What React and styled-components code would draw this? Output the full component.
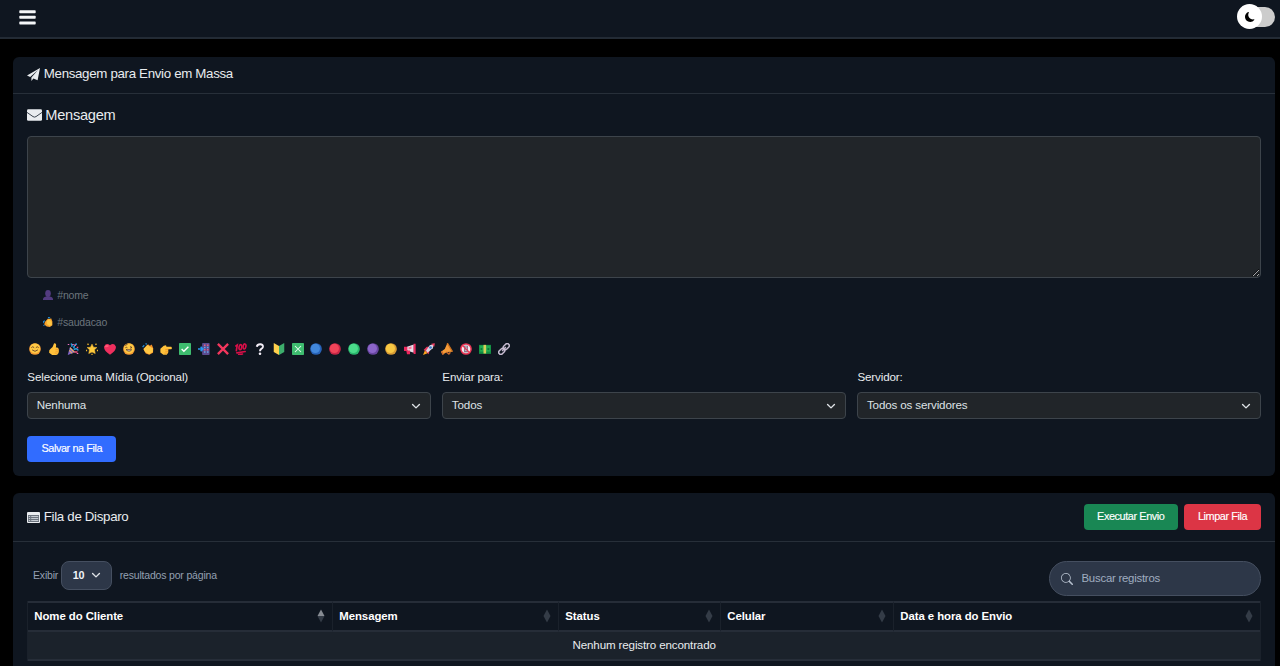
import React, { useState } from 'react';
import styled, { createGlobalStyle } from 'styled-components';
import { BsMoonFill, BsSearch } from 'react-icons/bs';

const GlobalStyle = createGlobalStyle`
  * {
    box-sizing: border-box;
  }
  body {
    margin: 0;
    background: #000;
    color: #e9ecef;
    font-family: "Liberation Sans", Arial, sans-serif;
    font-size: 11.6px;
    letter-spacing: -0.14px;
    overflow: hidden;
  }
`;

const TopBar = styled.header`
  height: 39px;
  padding: 0 5px 4px 19px;
  display: flex;
  align-items: center;
  justify-content: space-between;
  background: #0f1620;
  border-bottom: 2px solid #232b35;
`;

const MenuButton = styled.button`
  display: flex;
  padding: 1px 0 0;
  border: none;
  background: none;
`;

const Track = styled.div`
  width: 35px;
  height: 20px;
  border-radius: 10px;
  background: #ccc;
  display: flex;
  align-items: center;
`;

const Thumb = styled.div`
  flex: none;
  width: 25px;
  height: 25px;
  margin-left: -3px;
  border-radius: 50%;
  background: #fff;
  color: #000;
  display: flex;
  align-items: center;
  justify-content: center;
`;

const Page = styled.main`
  padding: 18px 4.7px 0 13.3px;
  display: flex;
  flex-direction: column;
  gap: 17px;
`;

const Card = styled.section`
  height: ${props => props.$height}px;
  background: #0f1620;
  border-radius: 6px;
`;

const CardHeader = styled.div`
  height: ${props => props.$height}px;
  padding: 0 14.3px 0 14px;
  display: flex;
  align-items: center;
  justify-content: space-between;
  border-bottom: 1px solid #272f39;
`;

const Title = styled.h5`
  margin: 0;
  padding-bottom: ${props => props.$lift || 0}px;
  display: flex;
  align-items: center;
  gap: 3.5px;
  font-size: 13.3px;
  font-weight: 400;
  line-height: 16px;
  letter-spacing: -0.32px;
`;

const CardBody = styled.div`
  padding: 0 14.3px 0 14px;
`;

const MessageTitle = styled.h4`
  margin: 0;
  height: 42px;
  display: flex;
  align-items: center;
  gap: 3px;
  font-size: 14.6px;
  font-weight: 400;
  letter-spacing: -0.25px;
`;

const Message = styled.textarea`
  display: block;
  width: 100%;
  height: 142px;
  border: 1px solid #3d444b;
  border-radius: 4px;
  background: #212529;
  color: #e9ecef;
  outline: none;
`;

const Tags = styled.div`
  padding: 4px 0 0 16px;
`;

const Tag = styled.div`
  height: 27px;
  padding-bottom: 2px;
  display: flex;
  align-items: center;
  gap: 4px;
  font-size: 10.5px;
  letter-spacing: -0.18px;
  color: #6c757d;
`;

const EmojiRow = styled.div`
  height: 28px;
  padding: 0 0 2px 2px;
  display: flex;
  align-items: center;
  gap: 6.74px;
`;

const Fields = styled.div`
  display: grid;
  grid-template-columns: repeat(3, 1fr);
  gap: 11.5px;
`;

const Label = styled.label`
  display: block;
  height: 28px;
  line-height: 25px;
`;

const SelectBox = styled.div`
  height: 27px;
  padding: 0 9px 0 8.5px;
  display: flex;
  align-items: center;
  justify-content: space-between;
  border: 1px solid #3d444b;
  border-radius: 4px;
  background: #212529;
  color: #dee2e6;
  line-height: 13px;

  span {
    padding-bottom: 2px;
  }
`;

const Button = styled.button`
  width: ${props => props.$width}px;
  height: 26px;
  padding: 0 0 2px;
  border: none;
  border-radius: 4px;
  background: ${props => props.$color};
  color: #fff;
  font-family: inherit;
  font-size: 10.9px;
  letter-spacing: -0.42px;
  -webkit-text-stroke: 0.15px #fff;
`;

const SaveRow = styled.div`
  padding-top: 17px;
`;

const Actions = styled.div`
  display: flex;
  gap: 6px;
`;

const Tools = styled.div`
  height: 59px;
  padding: 19px 0 0 5.7px;
  display: flex;
  align-items: flex-start;
  justify-content: space-between;
`;

const LengthPicker = styled.div`
  display: flex;
  align-items: center;
  font-size: 10.5px;
  letter-spacing: -0.18px;
  color: #94a0b2;

  > span {
    padding-bottom: 2px;
  }
`;

const LengthSelect = styled.div`
  width: 51px;
  height: 29px;
  margin: 0 8px 0 2.5px;
  padding: 0 10px 1px 11px;
  display: flex;
  align-items: center;
  justify-content: space-between;
  border: 1px solid #454f60;
  border-radius: 8px;
  background: #2d3748;
  color: #f1f4f8;
  font-size: 10.8px;
  font-weight: 700;
`;

const Search = styled.label`
  width: 212.5px;
  height: 35px;
  padding: 0 11px;
  display: flex;
  align-items: center;
  gap: 9px;
  border: 1px solid #454f60;
  border-radius: 18px;
  background: #2d3748;
  color: #b6c0ce;

  input {
    flex: 1;
    min-width: 0;
    padding: 0 0 2px;
    border: none;
    outline: none;
    background: none;
    color: #e9ecef;
    font-family: inherit;
    font-size: 11.4px;
    letter-spacing: -0.24px;
  }
  input::placeholder {
    color: #a0aec0;
  }
`;

const Table = styled.table`
  width: 100%;
  table-layout: fixed;
  border-collapse: separate;
  border-spacing: 0;
  border-left: 1px solid #1a212b;
  border-right: 1px solid #1a212b;

  th {
    height: 31px;
    padding: 0 7px 2px 6px;
    border-top: 2px solid #262d38;
    border-bottom: 2px solid #262d38;
    border-right: 1px solid #1a212b;
    text-align: left;
    color: #fff;
    font-size: 11.4px;
    letter-spacing: -0.07px;
  }
  th:last-child {
    border-right: none;
  }
  td {
    height: 29px;
    padding: 0 0 3px;
    border-bottom: 2px solid #262d38;
    background: #1b222b;
    text-align: center;
  }
`;

const HeadCell = styled.div`
  display: flex;
  align-items: center;
  justify-content: space-between;
`;

const BarsIcon = () => (
  <svg width="17" height="15" viewBox="0 0 17 15" fill="#f4f6f8">
    <rect x="0.3" y="0.2" width="16.4" height="3" rx="0.7" />
    <rect x="0.3" y="5.8" width="16.4" height="3" rx="0.7" />
    <rect x="0.3" y="11.4" width="16.4" height="3" rx="0.7" />
  </svg>
);

const PlaneIcon = () => (
  <svg width="13" height="13" viewBox="0 0 13 13" fill="#e9ecef">
    <path d="M13 0 0 7.5l3.2 1.4L11 2.1 4.4 9.5v3.5l2-2.4 4.2 1.7z" />
  </svg>
);

const EnvelopeIcon = () => (
  <svg width="15" height="12" viewBox="0 0 15 12">
    <rect y="0.3" width="15" height="11.5" rx="1.3" fill="#e9ecef" />
    <path d="M0 3.4 6 7.6q1.5 1 3 0l6-4.2" fill="none" stroke="#26303c" strokeWidth="0.9" />
  </svg>
);

const ListIcon = () => (
  <svg width="13" height="11" viewBox="0 0 13 11">
    <rect width="13" height="11" rx="1" fill="#e9ecef" />
    <rect x="1" y="3" width="11" height="7" fill="#6b737d" />
    <path d="M1.8 4.5h1.4M1.8 6.5h1.4M1.8 8.5h1.4M4.2 4.5h7M4.2 6.5h7M4.2 8.5h7" stroke="#c3c9d0" strokeWidth="1.1" />
  </svg>
);

const Chevron = () => (
  <svg width="10" height="10" viewBox="0 0 16 16" fill="none" stroke="#dee2e6" strokeWidth="2.2" strokeLinecap="round" strokeLinejoin="round">
    <path d="m2.5 5.5 5.5 5.5 5.5-5.5" />
  </svg>
);

const SortIcon = ({ active }) => (
  <svg width="8" height="14" viewBox="0 0 8 14">
    <path d="M4 0.5 7.5 7H0.5z" fill={active ? '#878c93' : '#343c47'} />
    <path d="M4 13.5 7.5 7H0.5z" fill="#343c47" />
  </svg>
);

const Ball = ({ from, to }) => (
  <>
    <circle cx="8" cy="8" r="7.8" fill={to} />
    <circle cx="7.2" cy="7.2" r="6.1" fill={from} />
  </>
);

const Face = ({ children }) => (
  <>
    <circle cx="8" cy="8" r="7.8" fill="#f59b32" />
    <circle cx="8" cy="7.2" r="6.7" fill="#ffc944" />
    <g fill="none" stroke="#593523" strokeWidth="1.1" strokeLinecap="round">{children}</g>
  </>
);

const drawings = {
  person: <><ellipse cx="8" cy="5.5" rx="4.5" ry="5.5" fill="#533b80" /><path d="M0 16v-2q1-4 8-4t8 4v2z" fill="#533b80" /></>,
  smile: <Face><path d="m3.5 6 1.5-1L6.5 6M9.5 6 11 5l1.5 1M4.5 9.5Q8 13 11.5 9.5" /></Face>,
  thumb: <><path d="M8 .5q4-.5 2.5 5.5h2q2.5 1 2 5-.5 5-4 5H5.5L1.5 13q-.5-4 2-5.5Q7 5 8 .5z" fill="#ffc13b" /><path d="M10 8.5h4M10 11h4M9 13.5h4" stroke="#e98b26" strokeWidth=".8" /></>,
  party: (
    <>
      <path d="m1 16 3-11 7 7z" fill="#8265c9" />
      <path d="m3 10 4 4M4 6.5l6 6" stroke="#f1b850" strokeWidth="1.4" />
      <path d="M5 1q3 1 1 4M9 7q0-4 4-6M9 9q4-3 6 1" fill="none" stroke="#249de0" strokeWidth="2" />
      <path d="M10 12h4M10 3h2M13 6h2" stroke="#f34f7b" strokeWidth="2" />
      <path d="M1 2h2M7 2h2M13 14h2" stroke="#ec72c2" strokeWidth="1.6" />
    </>
  ),
  star: (
    <>
      <path d="m8 1.5 2 4.2 4.5.3-3.2 3 1 5L8 12l-4.3 2 1-5-3.2-3 4.5-.3z" fill="#ffcb3d" stroke="#f4b931" strokeWidth=".8" />
      <path d="M2 1l1.4 1.4M14 1l-1.4 1.4M0 10h1.5M14.5 10H16M7.2 15.2h1.6" stroke="#f0b62f" strokeWidth="1.8" />
    </>
  ),
  heart: <><path d="M8 15.5Q-1 10 .2 4.5 3-1 8 3 13-1 15.8 4.5 17 10 8 15.5z" fill="#ef2f5e" /><path d="M2 5.5q1-3 4-1" fill="none" stroke="#ff5b76" strokeWidth="2.4" /></>,
  wink: <Face><path d="M3.5 6q1-1 2 0M10 5l2 1-2 .8M3 3l2.5-1" /><path d="M4.5 9h7q-3.5 4-7 0" fill="#fff" /></Face>,
  clap: (
    <>
      <path d="M.8 5.5 3 3M5 2l1-1.5" stroke="#2588cf" strokeWidth="1.9" />
      <path d="M2 8 8 1.5l2.5 2L13 2l2 5-.3 6-5 2.8L5 14z" fill="#f08c25" />
      <path d="m2 8 5-5.5L14.5 7v5l-5 3-5.5-3z" fill="#ffc744" />
    </>
  ),
  wave: (
    <>
      <path d="M0 10q0-3 3-4M2 14l-1-1.5M8 1q2-.5 3 1" fill="none" stroke="#2588cf" strokeWidth="2" />
      <path d="M3 8 8 2.5l2 1L13 2l2 5v6l-4 3-5-1-4-3z" fill="#f5a02c" />
      <path d="m6 6 4-3 4 5v5l-4 1-4-3z" fill="#ffc744" />
    </>
  ),
  point: <><path d="M.5 7.5 5 3.5l3-.5.7 2H15q1.8 1.7 0 3.4h-4v4.2L9 15.5H4.5L.5 12.5z" fill="#ffc13b" /><path d="M7 8.5h4M7 11h4M6 13.5h4" stroke="#e98b26" strokeWidth=".9" /></>,
  check: <><rect width="16" height="16" rx="1" fill="#3ebc6f" /><path d="m3.5 8 3 3 6-6" fill="none" stroke="#fff" strokeWidth="1.9" /></>,
  phone: (
    <>
      <rect x="5.5" y="0" width="10" height="16" rx="1" fill="#5c4b90" />
      <path d="M8 3h2M12 3h2M8 9h2M12 9h2" stroke="#e4607c" strokeWidth="2" />
      <path d="M8 6h2M12 6h2M8 12h2M12 12h2" stroke="#62a7e8" strokeWidth="2" />
      <path d="M0 8h6M3.5 5l3 3-3 3" fill="none" stroke="#2897ee" strokeWidth="2.2" />
    </>
  ),
  cross: <path d="m1.2 1.2 13.6 13.6M14.8 1.2 1.2 14.8" stroke="#f4375d" strokeWidth="3.1" />,
  hundred: (
    <g fill="none" stroke="#d80f48" strokeWidth="2.2" strokeLinecap="round">
      <path d="m1.2 4 1.8-1.2-1.2 7.4M2.5 13.2l11-1.8M5 15.5l5-.8" />
      <ellipse cx="7.2" cy="5.6" rx="1.8" ry="3.4" transform="rotate(10 7.2 5.6)" />
      <ellipse cx="12.7" cy="4.6" rx="1.8" ry="3.4" transform="rotate(10 12.7 4.6)" />
    </g>
  ),
  question: <><path d="M3.7 5Q4.5 1.5 8.3 1.6q4 .3 3.6 3.6-.3 1.7-2.3 2.8Q8 8.7 8 11" fill="none" stroke="#f4eff8" strokeWidth="2.6" /><circle cx="8" cy="14.3" r="1.7" fill="#f4eff8" /></>,
  beginner: <><path d="m1 0 7 4v12l-7-4z" fill="#ffd04c" /><path d="m15 0-7 4v12l7-4z" fill="#3dae6c" /></>,
  crossBox: <><rect width="16" height="16" rx="1" fill="#3ebc6f" /><path d="m4 4 8 8M12 4l-8 8" stroke="#e5fff0" strokeWidth="1.4" /></>,
  blue: <Ball from="#4288dc" to="#2863b8" />,
  red: <Ball from="#f04459" to="#c82646" />,
  green: <Ball from="#4bdc8b" to="#2ab66d" />,
  purple: <Ball from="#8b65c9" to="#67459f" />,
  yellow: <Ball from="#f8c843" to="#d79b35" />,
  megaphone: (
    <>
      <path d="M4 5 13 2v11l-9-3z" fill="#e9dce8" />
      <path d="M0 5h4.5v5.5H0zM12.8 1h2.7v13.5h-2.7zM3 10h5v5H4z" fill="#ed285e" />
      <path d="m6 5.5 4-1v3l-4 1z" fill="#fa7a9a" />
    </>
  ),
  rocket: (
    <>
      <path d="M1 9 5 5h5L7.5 15 4 12z" fill="#e7365c" />
      <path d="m4 10 5-7 6-2-2 6-7 6z" fill="#dbd5e4" />
      <path d="m11 1 4.8-.8L15 5z" fill="#f13c61" />
      <circle cx="10" cy="6" r="1.8" fill="#367bcb" />
      <path d="m0 16 2.5-6L6 13.5z" fill="#ffa51d" />
    </>
  ),
  horn: (
    <>
      <path d="M8.5 0 15.5 11.5 8 12l-6 3.5-2-4L5 8z" fill="#f59b38" />
      <path d="m8.3 0 7 11.5" stroke="#ca701e" strokeWidth="1.8" />
      <path d="m.7 11 2.4 4.5M7 12l3.5 2.5 2-2.3" stroke="#c9682b" strokeWidth="2" fill="none" />
    </>
  ),
  noPhone: (
    <>
      <circle cx="8" cy="8" r="6.8" fill="#f3e9ef" stroke="#ec3655" strokeWidth="2" />
      <rect x="5.3" y="3.5" width="5.4" height="9" fill="#8d7587" />
      <path d="M6.5 5.3h3M6.5 7.5h3M6.5 9.7h3" stroke="#dce7f4" />
      <path d="m3.5 3.5 9 9" stroke="#ec3655" strokeWidth="1.8" />
    </>
  ),
  money: (
    <>
      <rect y="2.5" width="16" height="12" fill="#118c42" />
      <rect x="1" y="3.5" width="14" height="8" fill="#20aa50" />
      <circle cx="12.5" cy="8" r="1.5" fill="#0e7338" />
      <circle cx="3.2" cy="8" r="1.3" fill="#0e7338" />
      <path d="M6 2.5h3.5V14H6z" fill="#d6d05a" />
    </>
  ),
  link: (
    <g fill="none" stroke="#c6bbd0" strokeWidth="2">
      <rect x="6.5" y="2" width="9" height="5.6" rx="2.8" transform="rotate(-45 11 4.8)" />
      <rect x=".5" y="8.4" width="9" height="5.6" rx="2.8" transform="rotate(-45 5 11.2)" />
      <path d="m5.5 10.5 5-5" />
    </g>
  ),
};

const Emoji = ({ name, size = 12 }) => (
  <svg width={size} height={size} viewBox="0 0 16 16">{drawings[name]}</svg>
);

const emojis = [
  'smile', 'thumb', 'party', 'star', 'heart', 'wink', 'clap', 'point', 'check', 'phone', 'cross', 'hundred', 'question',
  'beginner', 'crossBox', 'blue', 'red', 'green', 'purple', 'yellow', 'megaphone', 'rocket', 'horn', 'noPhone', 'money', 'link',
];

const fields = [
  { label: 'Selecione uma Mídia (Opcional)', value: 'Nenhuma' },
  { label: 'Enviar para:', value: 'Todos' },
  { label: 'Servidor:', value: 'Todos os servidores' },
];

const columns = [
  { name: 'Nome do Cliente', width: 305 },
  { name: 'Mensagem', width: 226 },
  { name: 'Status', width: 162 },
  { name: 'Celular', width: 173 },
  { name: 'Data e hora do Envio' },
];

function App() {
  const [message, setMessage] = useState('');

  return (
    <>
      <GlobalStyle />
      <TopBar>
        <MenuButton><BarsIcon /></MenuButton>
        <Track><Thumb><BsMoonFill size={10} /></Thumb></Track>
      </TopBar>
      <Page>
        <Card $height={419}>
          <CardHeader $height={37}>
            <Title $lift={2}><PlaneIcon /> Mensagem para Envio em Massa</Title>
          </CardHeader>
          <CardBody>
            <MessageTitle><EnvelopeIcon /> Mensagem</MessageTitle>
            <Message value={message} onChange={e => setMessage(e.target.value)} />
            <Tags>
              <Tag><Emoji name="person" size={10} />#nome</Tag>
              <Tag><Emoji name="wave" size={10} />#saudacao</Tag>
            </Tags>
            <EmojiRow>
              {emojis.map(name => <Emoji key={name} name={name} />)}
            </EmojiRow>
            <Fields>
              {fields.map(field => (
                <div key={field.label}>
                  <Label>{field.label}</Label>
                  <SelectBox><span>{field.value}</span><Chevron /></SelectBox>
                </div>
              ))}
            </Fields>
            <SaveRow><Button $width={89} $color="#316cff">Salvar na Fila</Button></SaveRow>
          </CardBody>
        </Card>
        <Card $height={200}>
          <CardHeader $height={49}>
            <Title><ListIcon /> Fila de Disparo</Title>
            <Actions>
              <Button $width={94.5} $color="#198754">Executar Envio</Button>
              <Button $width={77} $color="#dc3545">Limpar Fila</Button>
            </Actions>
          </CardHeader>
          <CardBody>
            <Tools>
              <LengthPicker>
                <span>Exibir</span>
                <LengthSelect>10<Chevron /></LengthSelect>
                <span>resultados por página</span>
              </LengthPicker>
              <Search>
                <BsSearch size={12} />
                <input placeholder="Buscar registros" />
              </Search>
            </Tools>
            <Table>
              <colgroup>
                {columns.map(col => <col key={col.name} width={col.width} />)}
              </colgroup>
              <thead>
                <tr>
                  {columns.map((col, index) => (
                    <th key={col.name}>
                      <HeadCell>{col.name}<SortIcon active={index === 0} /></HeadCell>
                    </th>
                  ))}
                </tr>
              </thead>
              <tbody>
                <tr><td colSpan={5}>Nenhum registro encontrado</td></tr>
              </tbody>
            </Table>
          </CardBody>
        </Card>
      </Page>
    </>
  );
}

export default App;
